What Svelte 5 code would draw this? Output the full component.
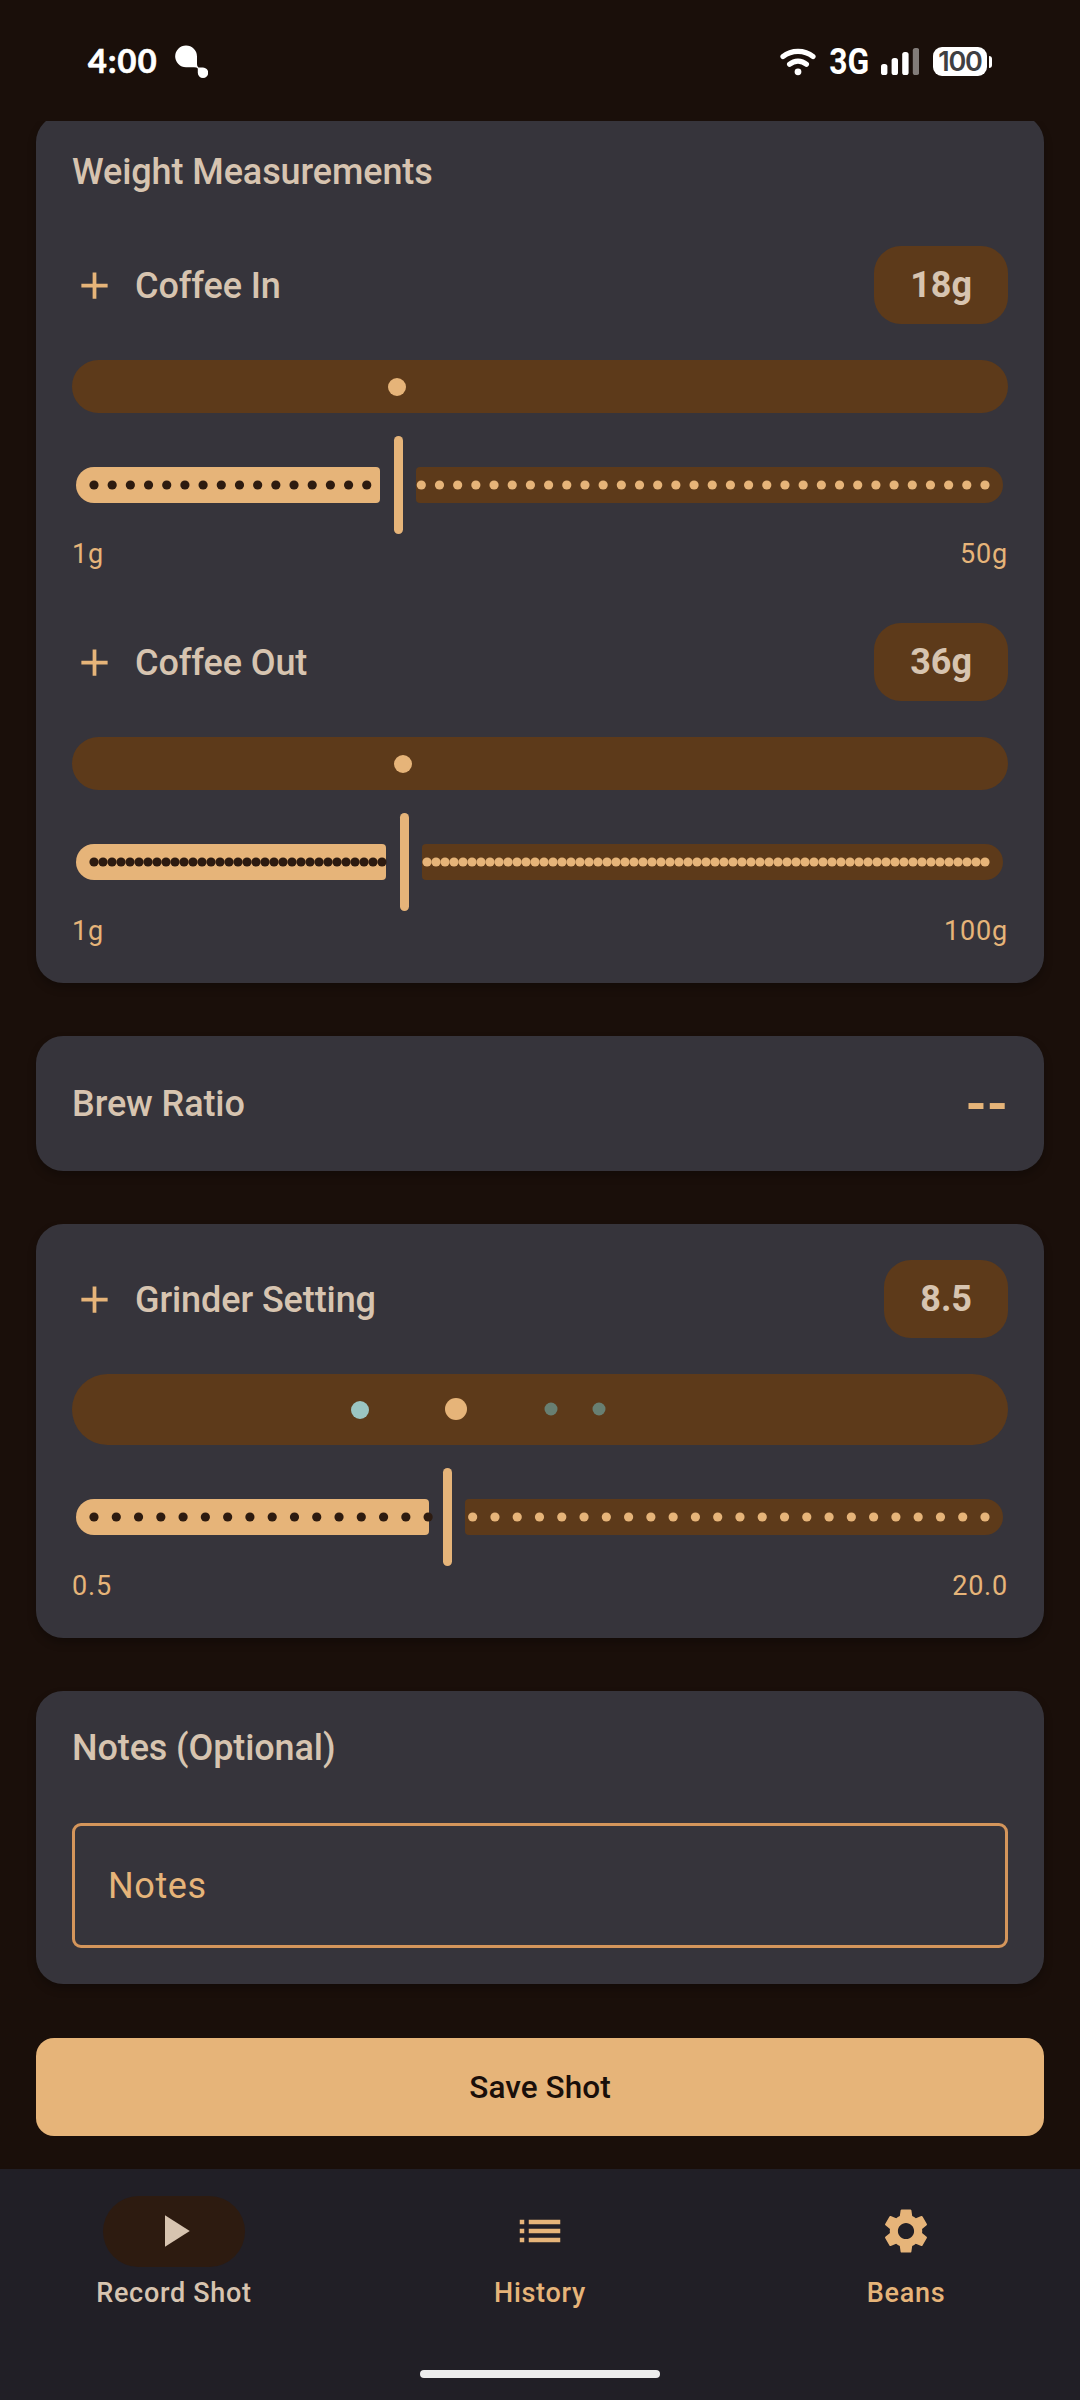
<script>
  const weights = [
    { label: 'Coffee In', value: '18g', min: '1g', max: '50g', steps: 49, at: 17, marks: [{ x: 325, size: 18, kind: 'current' }] },
    { label: 'Coffee Out', value: '36g', min: '1g', max: '100g', steps: 99, at: 35, marks: [{ x: 331, size: 18, kind: 'current' }] }
  ];
  const grinder = {
    label: 'Grinder Setting', value: '8.5', min: '0.5', max: '20.0', steps: 40, at: 16, tall: true,
    marks: [
      { x: 288, size: 18, kind: 'recent', dy: 0.5 },
      { x: 384, size: 22, kind: 'current', dy: -0.5 },
      { x: 479, size: 13, kind: 'past', dy: -0.5 },
      { x: 527, size: 13, kind: 'past', dy: -0.5 }
    ]
  };

  const START = 4;
  const LENGTH = 927;
  const GAP = 18;

  function ticks(steps, at) {
    const thumb = START + (LENGTH * at) / steps;
    return Array.from({ length: steps + 1 }, (_, i) => {
      const x = START + 18 + ((LENGTH - 36) * i) / steps;
      return { x, active: x < thumb, hidden: Math.abs(x - thumb) < GAP };
    }).filter((t) => !t.hidden);
  }
</script>

{#snippet slider(steps, at)}
  {@const thumb = Math.round(START + (LENGTH * at) / steps) + 0.5}
  {@const left = thumb - GAP - 0.5}
  {@const right = thumb + GAP - 0.5}
  <svg class="slider" viewBox="0 0 936 98" width="936" height="98">
    <path class="on" d="M22 31H{left - 4}a4 4 0 0 1 4 4V63a4 4 0 0 1 -4 4H22a18 18 0 0 1 0 -36z" />
    <path class="off" d="M{right + 4} 31H913a18 18 0 0 1 0 36H{right + 4}a4 4 0 0 1 -4 -4V35a4 4 0 0 1 4 -4z" />
    {#each ticks(steps, at) as t}
      <circle class={t.active ? 'tick-on' : 'on'} cx={t.x} cy="49" r="4.6" />
    {/each}
    <rect class="on" x={thumb - 4.5} y="0" width="9" height="98" rx="4.5" />
  </svg>
{/snippet}

{#snippet control(c)}
  <div class="control">
    <div class="head">
      <svg class="add" viewBox="0 0 24 24" width="45" height="45"><path d="M19 13h-6v6h-2v-6H5v-2h6V5h2v6h6v2z" /></svg>
      <span class="title">{c.label}</span>
      <span class="value">{c.value}</span>
    </div>
    <div class="history" class:tall={c.tall}>
      {#each c.marks as m}
        <i class="mark {m.kind}" style="left:{m.x}px;width:{m.size}px;height:{m.size}px;margin-top:{m.dy ?? 0.5}px"></i>
      {/each}
    </div>
    {@render slider(c.steps, c.at)}
    <div class="range"><span>{c.min}</span><span>{c.max}</span></div>
  </div>
{/snippet}

<div class="screen">
  <header class="status">
    <span class="clock">4:00</span>
    <svg class="blob" viewBox="0 0 34 36" width="34" height="36">
      <path d="M12 1.5a11 11 0 0 1 11 11V20q0 3 1.4 3.6H29a5.2 5.2 0 1 1-5.2 5.2V24.4Q23 23.2 20 23.2H12A10.8 10.8 0 0 1 12 1.5z" />
    </svg>
    <div class="tray">
      <svg class="wifi" viewBox="0 0 36 28" width="36" height="28">
        <path d="M3 8.6C11.5 1.6 24.5 1.6 33 8.6" />
        <path d="M9.6 16.2C14.4 12 21.6 12 26.4 16.2" />
        <circle cx="18" cy="23.8" r="3.4" />
      </svg>
      <span class="net">3G</span>
      <svg class="signal" viewBox="0 0 38 27" width="38" height="27">
        <rect x="0" y="16" width="6.4" height="11" rx="2.6" />
        <rect x="10.6" y="10" width="6.4" height="17" rx="2.6" />
        <rect x="21.2" y="4" width="6.4" height="23" rx="2.6" />
        <rect class="dim" x="31.8" y="0" width="6.4" height="27" rx="2.6" />
      </svg>
      <div class="battery"><span>100</span></div>
      <i class="nub"></i>
    </div>
  </header>

  <main>
    <section class="card weights">
      <h2 class="title">Weight Measurements</h2>
      {#each weights as w}
        {@render control(w)}
      {/each}
    </section>

    <section class="card ratio">
      <span class="title">Brew Ratio</span>
      <span class="dashes">--</span>
    </section>

    <section class="card grind">
      {@render control(grinder)}
    </section>

    <section class="card notes">
      <h2 class="title">Notes (Optional)</h2>
      <div class="field">Notes</div>
    </section>

    <button class="save">Save Shot</button>
  </main>

  <nav>
    <div class="tabs">
      <div class="tab selected">
        <div class="pill"><svg viewBox="0 0 24 24" width="54" height="54"><path d="M8 5v14l11-7z" /></svg></div>
        <span>Record Shot</span>
      </div>
      <div class="tab">
        <div class="pill"><svg viewBox="0 0 24 24" width="54" height="54"><path d="M3 13h2v-2H3v2zm0 4h2v-2H3v2zm0-8h2V7H3v2zm4 4h14v-2H7v2zm0 4h14v-2H7v2zM7 7v2h14V7H7z" /></svg></div>
        <span>History</span>
      </div>
      <div class="tab">
        <div class="pill"><svg viewBox="0 0 24 24" width="54" height="54"><path d="M19.14 12.94c.04-.3.06-.61.06-.94 0-.32-.02-.64-.07-.94l2.03-1.58c.18-.14.23-.41.12-.61l-1.92-3.32c-.12-.22-.37-.29-.59-.22l-2.39.96c-.5-.38-1.03-.7-1.62-.94l-.36-2.54c-.04-.24-.24-.41-.48-.41h-3.84c-.24 0-.43.17-.47.41l-.36 2.54c-.59.24-1.13.57-1.62.94l-2.39-.96c-.22-.08-.47 0-.59.22L2.74 8.87c-.12.21-.08.47.12.61l2.03 1.58c-.05.3-.09.63-.09.94s.02.64.07.94l-2.03 1.58c-.18.14-.23.41-.12.61l1.92 3.32c.12.22.37.29.59.22l2.39-.96c.5.38 1.03.7 1.62.94l.36 2.54c.05.24.24.41.48.41h3.84c.24 0 .44-.17.47-.41l.36-2.54c.59-.24 1.13-.56 1.62-.94l2.39.96c.22.08.47 0 .59-.22l1.92-3.32c.12-.22.07-.47-.12-.61l-2.01-1.58zM12 15.6c-1.98 0-3.6-1.62-3.6-3.6s1.62-3.6 3.6-3.6 3.6 1.62 3.6 3.6-1.62 3.6-3.6 3.6z" /></svg></div>
        <span>Beans</span>
      </div>
    </div>
    <div class="home"></div>
  </nav>
</div>

<style>
  :global(body) {
    margin: 0;
    background: #1a0f0a;
  }
  .screen {
    --cream: #d7c4b0;
    --amber: #e6b479;
    --brown: #5d3a1a;
    display: flex;
    flex-direction: column;
    width: 1080px;
    height: 2400px;
    overflow: hidden;
    background: #1a0f0a;
    font-family: Roboto, 'Liberation Sans', sans-serif;
  }
  svg {
    display: block;
    flex: none;
  }

  .status {
    display: flex;
    align-items: center;
    flex: none;
    box-sizing: border-box;
    height: 121px;
    padding: 2px 88px 0;
  }
  .clock {
    width: 70px;
    padding-bottom: 2px;
    color: #fff;
    font: 700 32.5px/40px Lato, sans-serif;
    letter-spacing: 1.2px;
    white-space: nowrap;
    -webkit-text-stroke: 0.7px #fff;
  }
  .blob {
    margin-left: 16px;
    fill: #fff;
  }
  .tray {
    display: flex;
    align-items: center;
    margin-left: auto;
  }
  .wifi {
    fill: none;
    stroke: #fff;
    stroke-width: 5.2;
    stroke-linecap: round;
  }
  .wifi circle {
    fill: #fff;
    stroke: none;
  }
  .net {
    width: 51px;
    box-sizing: border-box;
    padding-left: 13px;
    color: #fff;
    font: 700 37px/40px Roboto, sans-serif;
    transform: scaleX(0.86);
    transform-origin: 14px 50%;
  }
  .signal {
    margin-left: 14px;
    margin-right: 14px;
    fill: #fff;
  }
  .signal .dim {
    fill: #827c79;
  }
  .battery {
    display: flex;
    align-items: center;
    justify-content: center;
    width: 54px;
    height: 29px;
    border-radius: 9px;
    background: #fff;
    color: #3f3f42;
    font: 600 27px/29px Inter, sans-serif;
    letter-spacing: -1.2px;
  }
  .nub {
    width: 3px;
    height: 12px;
    margin-left: 2px;
    border-radius: 0 3px 3px 0;
    background: #fff;
  }

  main {
    display: flex;
    flex-direction: column;
    flex: none;
    box-sizing: border-box;
    height: 2048px;
    padding: 0 36px;
    overflow: hidden;
  }
  .card {
    flex: none;
    box-sizing: border-box;
    padding: 36px 36px 0;
    border-radius: 27px;
    background: #36343b;
    box-shadow: 0 5px 9px rgba(0, 0, 0, 0.25);
  }
  .title {
    margin: 0;
    color: var(--cream);
    font-size: 36px;
    font-weight: 500;
    line-height: 54px;
    letter-spacing: -0.1px;
  }
  .weights {
    height: 868px;
    margin-top: -6px;
    padding-top: 30px;
  }
  .weights .title + .control {
    margin-top: 47px;
  }
  .control + .control {
    margin-top: 51px;
  }
  .head {
    display: flex;
    align-items: center;
    height: 78px;
  }
  .head .title {
    padding-top: 2px;
  }
  .add {
    margin-right: 18px;
    fill: var(--amber);
  }
  .value {
    margin-left: auto;
    padding: 0 36px;
    border-radius: 27px;
    background: var(--brown);
    color: var(--cream);
    font-size: 36px;
    font-weight: 700;
    line-height: 78px;
    letter-spacing: 0;
  }
  .history {
    position: relative;
    height: 53px;
    margin-top: 36px;
    border-radius: 27px;
    background: var(--brown);
  }
  .history.tall {
    height: 71px;
    border-radius: 36px;
  }
  .mark {
    position: absolute;
    top: 50%;
    border-radius: 50%;
    transform: translate(-50%, -50%);
  }
  .current {
    background: var(--amber);
  }
  .recent {
    background: #9bc5c2;
  }
  .past {
    background: #687f72;
  }
  .slider {
    margin-top: 23px;
  }
  .on {
    fill: var(--amber);
  }
  .off {
    fill: var(--brown);
  }
  .tick-on {
    fill: #2d1b10;
  }
  .range {
    display: flex;
    justify-content: space-between;
    margin-top: 2px;
    color: var(--amber);
    font-size: 27px;
    line-height: 36px;
    letter-spacing: 0.8px;
  }
  .ratio {
    display: flex;
    align-items: center;
    justify-content: space-between;
    height: 135px;
    margin-top: 53px;
    padding-top: 0;
  }
  .dashes {
    color: var(--amber);
    font-size: 54px;
    font-weight: 700;
    line-height: 72px;
  }
  .grind {
    height: 414px;
    margin-top: 53px;
  }
  .notes {
    height: 293px;
    margin-top: 53px;
    padding-top: 30px;
  }
  .field {
    box-sizing: border-box;
    height: 125px;
    margin-top: 48px;
    padding-left: 33px;
    border: 3px solid #d4955b;
    border-radius: 9px;
    color: var(--amber);
    font-size: 36px;
    line-height: 121px;
    letter-spacing: 0.6px;
  }
  .save {
    flex: none;
    height: 98px;
    margin-top: 54px;
    padding: 0;
    border: 0;
    border-radius: 18px;
    background: var(--amber);
    color: #1a0f0a;
    font: 500 31.5px/45px Roboto, sans-serif;
    letter-spacing: 0.05px;
  }

  nav {
    display: flex;
    flex-direction: column;
    flex: 1;
    background: #211f26;
  }
  .tabs {
    display: grid;
    grid-template-columns: repeat(3, 1fr);
    gap: 18px;
    height: 201px;
  }
  .tab {
    display: flex;
    flex-direction: column;
    align-items: center;
    padding-top: 27px;
    color: var(--amber);
    font-size: 27px;
    font-weight: 500;
    line-height: 36px;
    letter-spacing: 0.7px;
  }
  .pill {
    display: flex;
    align-items: center;
    justify-content: center;
    width: 142px;
    height: 71px;
    margin-bottom: 8px;
    border-radius: 36px;
  }
  .pill svg {
    margin-bottom: 1px;
    fill: currentColor;
  }
  .selected {
    color: var(--cream);
  }
  .selected .pill {
    background: #2d1b10;
  }
  .home {
    width: 240px;
    height: 8px;
    margin: 0 auto;
    border-radius: 4px;
    background: #ececec;
  }
</style>
